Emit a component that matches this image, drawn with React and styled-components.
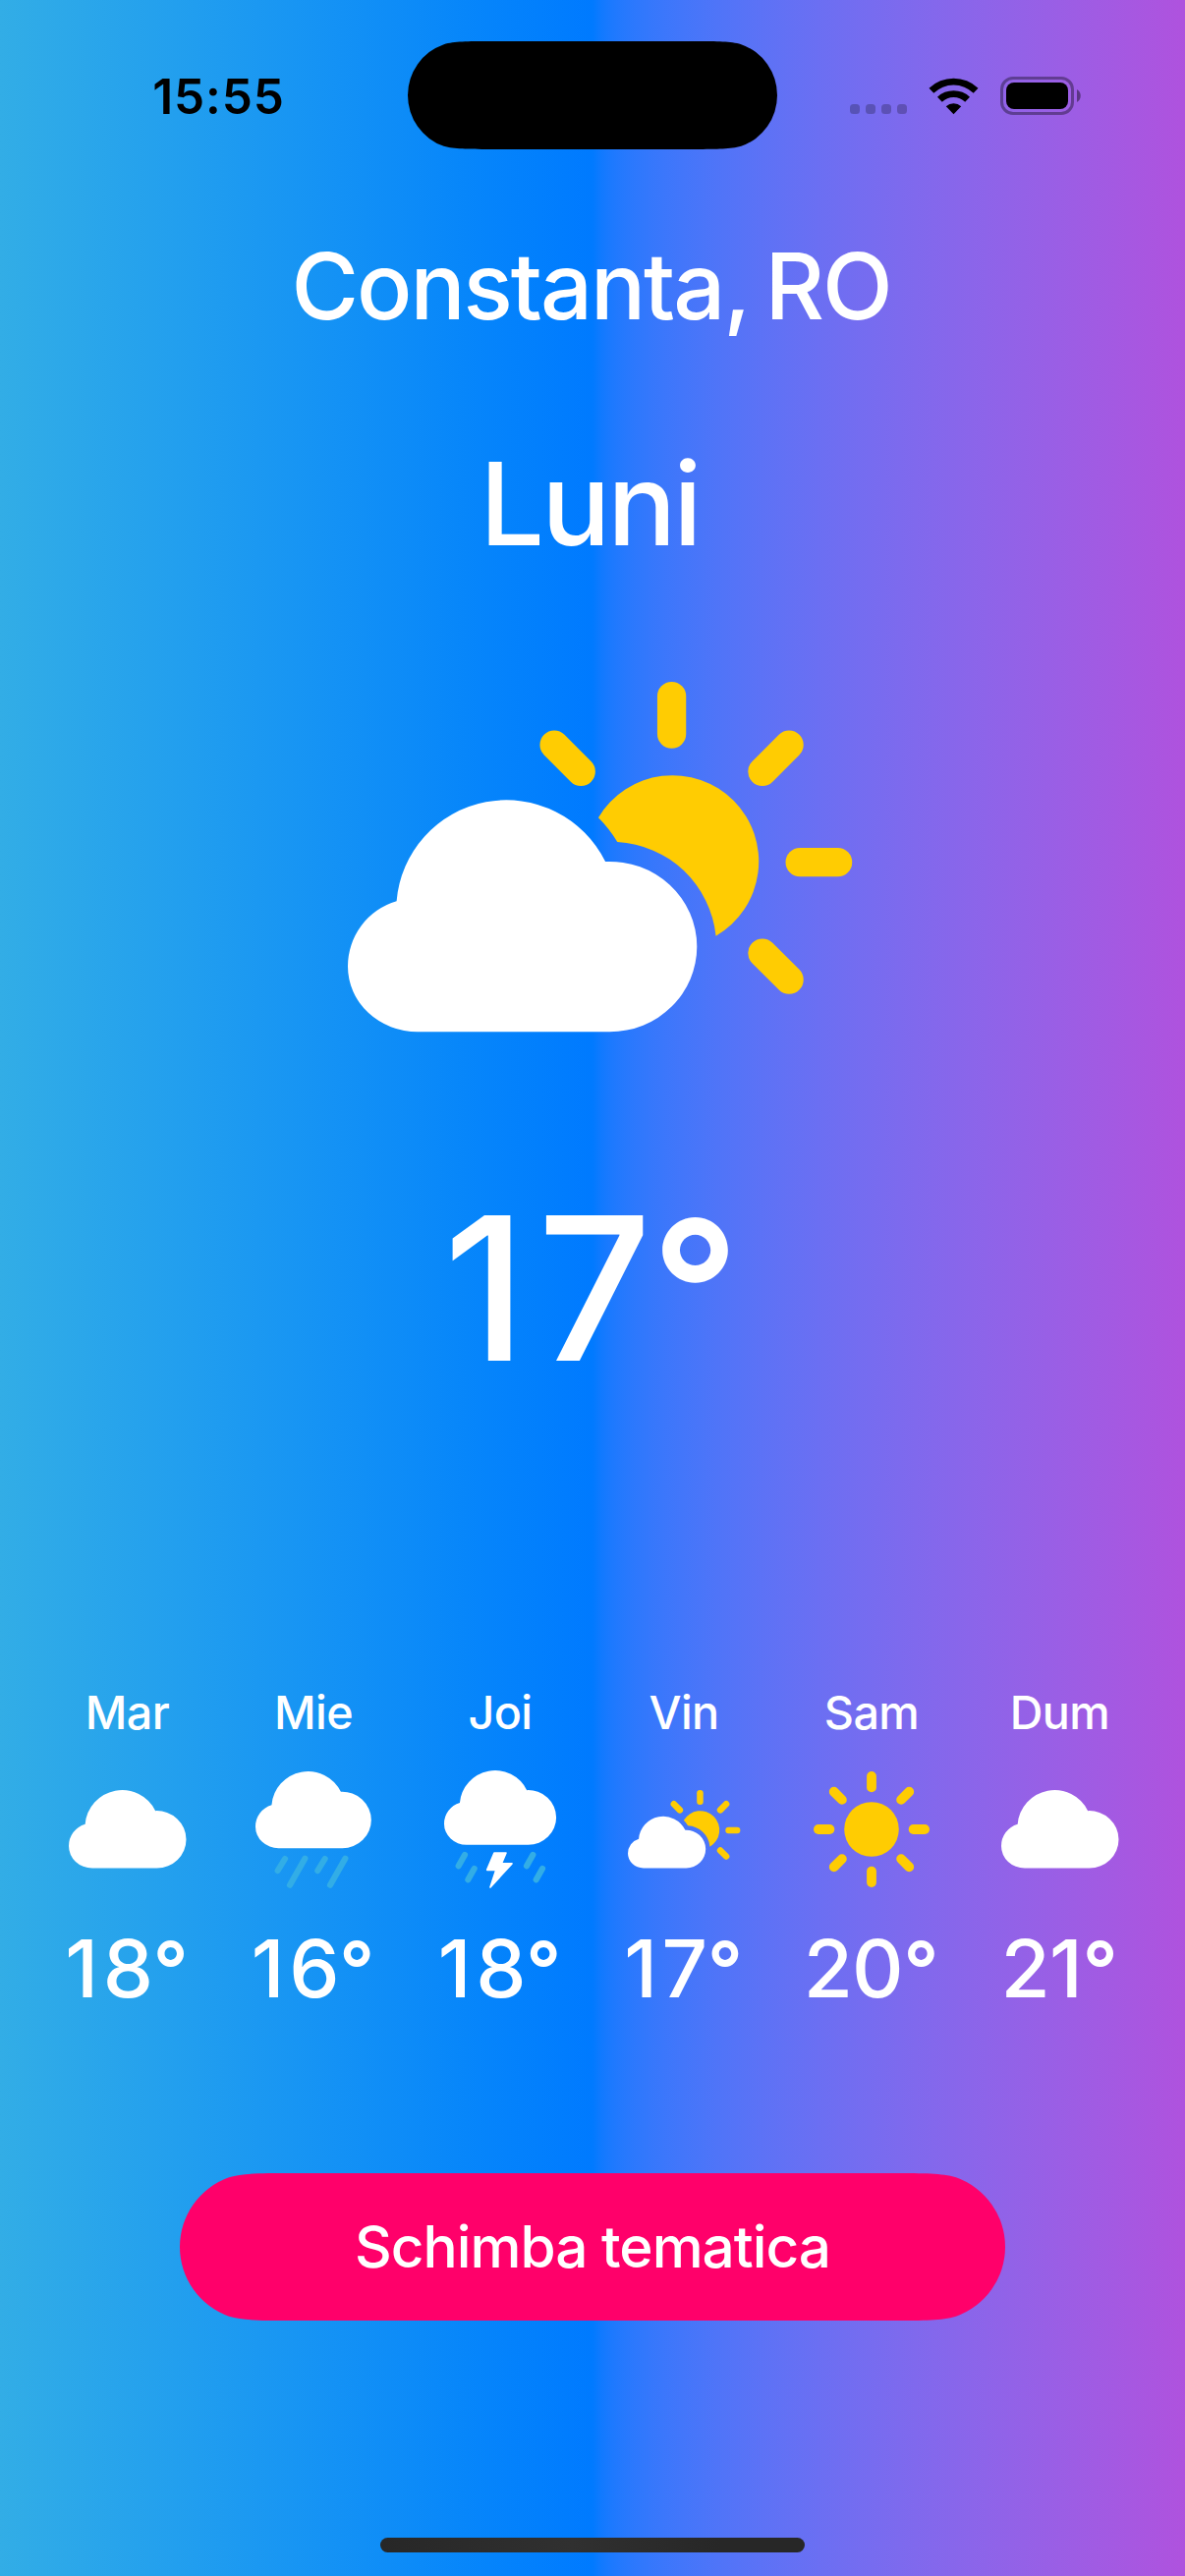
import React from "react";
import styled, { createGlobalStyle } from "styled-components";

const CLOUD =
  "M71 236 H266.5 A88.8 86.9 0 0 0 355.3 149.1 A89 86.6 0 0 0 262.1 62.7 A112.2 112.2 0 0 0 49.6 103 A69 69 0 0 0 0 169.5 A71 66.5 0 0 0 71 236Z";
const YELLOW = "#ffcc02";
const CYAN = "#32ade6";

// Capsule whose straight edges ease into the round ends.
function capsule(w, h) {
  const r = h / 2;
  const a = 1.5287 * r;
  const b = 1.0885 * r;
  const c = 0.8684 * r;
  const d = 0.667 * r;
  const e = 0.057 * r;
  return (
    `M${a} 0 C${b} 0 ${c} 0 ${d} ${e} A${r} ${r} 0 0 0 0 ${r} A${r} ${r} 0 0 0 ${d} ${h - e} ` +
    `C${c} ${h} ${b} ${h} ${a} ${h} H${w - a} C${w - b} ${h} ${w - c} ${h} ${w - d} ${h - e} ` +
    `A${r} ${r} 0 0 0 ${w} ${r} A${r} ${r} 0 0 0 ${w - d} ${e} C${w - c} 0 ${w - b} 0 ${w - a} 0 Z`
  );
}

const GlobalStyle = createGlobalStyle`
  html, body { margin: 0; padding: 0; }
  body { font-family: Inter, "Liberation Sans", sans-serif; -webkit-font-smoothing: antialiased; }
`;

const Screen = styled.main`
  box-sizing: border-box;
  width: 1206px;
  height: 2622px;
  padding-bottom: 24px;
  display: flex;
  flex-direction: column;
  align-items: center;
  overflow: hidden;
  color: #fff;
  background: linear-gradient(to right in oklab, #32ade6, #007aff 50%, #af52de);
`;

const StatusBar = styled.header`
  box-sizing: border-box;
  width: 100%;
  height: 177px;
  padding-top: 42px;
  display: grid;
  grid-template-columns: 415px 376px 415px;
  align-items: start;
`;

const Clock = styled.time`
  height: 113px;
  line-height: 113px;
  padding-left: 30px;
  text-align: center;
  color: #000;
  font-size: 49.5px;
  font-weight: 600;
  letter-spacing: 0.9px;
`;

const Island = styled.div`
  height: 110px;
  background: #000;
  clip-path: path("${capsule(376, 110)}");
`;

const Indicators = styled.div`
  height: 111px;
  padding-left: 74px;
  display: flex;
  align-items: center;
`;

const SignalDots = styled.div`
  display: flex;
  gap: 6px;
  margin-right: 22px;
  padding-top: 27px;
`;

const SignalDot = styled.span`
  width: 10px;
  height: 10px;
  border-radius: 3.5px;
  background: rgba(0, 0, 0, 0.24);
`;

const WifiSvg = styled.svg`
  width: 51px;
  height: 38px;
  margin-right: 22px;
`;

const BatterySvg = styled.svg`
  width: 83px;
  height: 39px;
`;

const Label = styled.div`
  height: ${(p) => p.$height}px;
  line-height: ${(p) => p.$height}px;
  margin: ${(p) => p.$top || 0}px 0 0;
  font-size: ${(p) => p.$size}px;
  font-weight: 500;
  letter-spacing: ${(p) => p.$tracking || 0}px;
  white-space: nowrap;
`;

const CityName = styled(Label)`
  padding-right: 3px;
  word-spacing: -6px;
`;

const DayName = styled(Label)`
  padding-right: 6px;
`;

const TempLabel = styled(Label)`
  padding-right: 0.012em;
  letter-spacing: -0.015em;
`;

const LeadDigit = styled.span`
  letter-spacing: ${(p) => (p.$narrow ? "0.055em" : "-0.01em")};
`;

const Degree = styled.span`
  display: inline-block;
  margin-left: 0.014em;
  font-size: 0.96em;
  font-weight: 600;
  line-height: 0;
  letter-spacing: 0;
  vertical-align: 0.013em;
`;

const HeroIcon = styled.div`
  margin-top: 109px;
  height: 357px;
  padding-left: 15px;
`;

const Forecast = styled.section`
  margin-top: 278px;
  display: flex;
  gap: 60px;
`;

const Day = styled.article`
  width: ${(p) => p.$width}px;
  display: flex;
  flex-direction: column;
  align-items: center;
`;

const IconBox = styled.div`
  height: 120px;
  margin-top: 30px;
  display: flex;
  align-items: center;
  justify-content: center;
`;

const Icon = styled.svg`
  display: block;
  width: ${(p) => p.$w}px;
  height: ${(p) => p.$h}px;
  overflow: visible;
`;

const ThemeButton = styled.button`
  width: 840px;
  height: 150px;
  margin-top: 158px;
  padding: 0;
  border: 0;
  color: #fff;
  background: #ff006a;
  clip-path: path("${capsule(840, 150)}");
  font-family: inherit;
  font-size: 58.5px;
  font-weight: 500;
  letter-spacing: -1px;
  line-height: 150px;
`;

const HomeIndicator = styled.div`
  width: 432px;
  height: 15px;
  margin-top: auto;
  border-radius: 7.5px;
  background: linear-gradient(to right, #272727, #303030 45%, #272727 80%);
`;

function Rays({ cx, cy, inner, outer, width, angles }) {
  return angles.map((deg) => {
    const c = Math.cos((deg * Math.PI) / 180);
    const s = Math.sin((deg * Math.PI) / 180);
    return (
      <line
        key={deg}
        x1={cx + inner * c}
        y1={cy + inner * s}
        x2={cx + outer * c}
        y2={cy + outer * s}
        stroke={YELLOW}
        strokeWidth={width}
        strokeLinecap="round"
      />
    );
  });
}

function CloudSun({ w, h }) {
  return (
    <Icon $w={w} $h={h} viewBox="0 -120.3 513.2 356.3">
      <path d={CLOUD} fill="#fff" />
      <path
        fill={YELLOW}
        d="M255 18 A87.7 87.7 0 1 1 374.6 138.4 A106.8 106.8 0 0 0 274.3 42.7 A132.4 132.4 0 0 0 255 18Z"
      />
      <Rays cx={329.6} cy={63.4} inner={130.6} outer={169} width={29.3} angles={[-135, -90, -45, 0, 45]} />
    </Icon>
  );
}

function Cloud() {
  return (
    <Icon $w={119.5} $h={79.5} viewBox="0 0 355.3 236">
      <path d={CLOUD} fill="#fff" />
    </Icon>
  );
}

function CloudRain() {
  return (
    <Icon $w={118} $h={118.7} viewBox="30 37 354 356">
      <path d={CLOUD} fill="#fff" transform="translate(30 37) scale(0.995)" />
      <path
        d="M120 304L98 340M181 303L135 384M242 304L220 340M304 303L258 384"
        stroke={CYAN}
        strokeWidth="18.5"
        strokeLinecap="round"
        fill="none"
      />
    </Icon>
  );
}

function CloudStorm() {
  return (
    <Icon $w={114} $h={120} viewBox="36 36 342 360">
      <path d={CLOUD} fill="#fff" transform="translate(36 36) scale(0.9634)" />
      <path
        d="M99 294L80 328M128 336L109 370M307 294L288 328M336 336L317 370"
        stroke={CYAN}
        strokeWidth="18.5"
        strokeLinecap="round"
        fill="none"
      />
      <path
        d="M189 288H225L211 320.500H243L177 393L194.500 340H167Z"
        fill="#fff"
        stroke="#fff"
        strokeWidth="5"
        strokeLinejoin="round"
      />
    </Icon>
  );
}

function Sun() {
  return (
    <Icon $w={118} $h={118} viewBox="-59 -59 118 118">
      <circle r="27.8" fill={YELLOW} />
      <Rays cx={0} cy={0} inner={42.6} outer={54.1} width={9.8} angles={[0, 45, 90, 135, 180, 225, 270, 315]} />
    </Icon>
  );
}

function Temperature({ value, height, top, size }) {
  const [lead, ...rest] = String(value);
  return (
    <TempLabel $height={height} $top={top} $size={size}>
      <LeadDigit $narrow={lead === "1"}>{lead}</LeadDigit>
      {rest.join("")}
      <Degree>°</Degree>
    </TempLabel>
  );
}

const days = [
  { name: "Mar", temp: 18, width: 129, icon: <Cloud /> },
  { name: "Mie", temp: 16, width: 130, icon: <CloudRain /> },
  { name: "Joi", temp: 18, width: 130, icon: <CloudStorm /> },
  { name: "Vin", temp: 17, width: 124, icon: <CloudSun w={114.4} h={79.4} /> },
  { name: "Sam", temp: 20, width: 138, icon: <Sun /> },
  { name: "Dum", temp: 21, width: 125, icon: <Cloud /> },
];

function Wifi() {
  return (
    <WifiSvg viewBox="0 0 51 38">
      <path d="M0.500 10.800 A36 36 0 0 1 50.500 10.800 L45.700 15.700 A29 29 0 0 0 5.300 15.700Z" />
      <path d="M9 19.700 A24 24 0 0 1 42 19.700 L37.200 24.700 A17 17 0 0 0 13.800 24.700Z" />
      <path d="M17.800 29.300 A11.500 11.500 0 0 1 33.200 29.300 L25.500 37.200Z" />
    </WifiSvg>
  );
}

function Battery() {
  return (
    <BatterySvg viewBox="0 0 83 39">
      <rect x="1.500" y="1.500" width="72" height="36" rx="11.500" fill="none" stroke="#000" strokeOpacity="0.36" strokeWidth="3" />
      <rect x="6" y="6" width="63" height="27" rx="8" />
      <path d="M78 13 C83 15.500 83 23.500 78 26Z" fillOpacity="0.42" />
    </BatterySvg>
  );
}

export default function App() {
  return (
    <>
      <GlobalStyle />
      <Screen>
        <StatusBar>
          <Clock>15:55</Clock>
          <Island />
          <Indicators>
            <SignalDots>
              <SignalDot />
              <SignalDot />
              <SignalDot />
              <SignalDot />
            </SignalDots>
            <Wifi />
            <Battery />
          </Indicators>
        </StatusBar>
        <CityName as="h1" $height={116} $top={56} $size={93.5} $tracking={-2.1}>
          Constanta, RO
        </CityName>
        <DayName $height={144} $top={92} $size={116.5} $tracking={-3}>
          Luni
        </DayName>
        <HeroIcon>
          <CloudSun w={513.2} h={356.3} />
        </HeroIcon>
        <Temperature value={17} height={250} top={135} size={203.5} />
        <Forecast>
          {days.map((day) => (
            <Day key={day.name} $width={day.width}>
              <Label $height={58} $size={46.7} $tracking={-0.6}>
                {day.name}
              </Label>
              <IconBox>{day.icon}</IconBox>
              <Temperature value={day.temp} height={100} top={32} size={81.5} />
            </Day>
          ))}
        </Forecast>
        <ThemeButton type="button">Schimba tematica</ThemeButton>
        <HomeIndicator />
      </Screen>
    </>
  );
}
